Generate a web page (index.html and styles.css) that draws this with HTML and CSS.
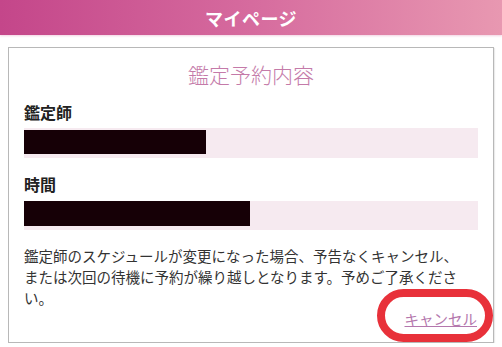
FILE: index.html
```html
<!DOCTYPE html>
<html lang="ja">
<head>
    <meta charset="UTF-8">
    <meta name="viewport" content="width=device-width, initial-scale=1.0">
    <title>マイページ</title>
    <link rel="stylesheet" href="styles.css">
</head>
<body>
    <header class="page-header">
        <h1>マイページ</h1>
    </header>

    <main>
        <section class="card">
            <h2 class="card-title">鑑定予約内容</h2>

            <div class="field field-first">
                <h3>鑑定師</h3>
                <div class="value"><span class="masked" style="width: 182px;"></span></div>
            </div>

            <div class="field">
                <h3>時間</h3>
                <div class="value value-short"><span class="masked" style="width: 226px;"></span></div>
            </div>

            <p class="notice">鑑定師のスケジュールが変更になった場合、予告なくキャンセル、または次回の待機に予約が繰り越しとなります。予めご了承ください。</p>

            <div class="actions">
                <a href="#" class="cancel-link">キャンセル</a>
            </div>

            <!-- red marker drawn over the screenshot -->
            <div class="marker"></div>
        </section>
    </main>
</body>
</html>
```

FILE: styles.css
```css
* {
    margin: 0;
    padding: 0;
    box-sizing: border-box;
}

body {
    font-family: "Noto Sans CJK JP", "Noto Sans", sans-serif;
    color: #333;
    background: #fff;
}

.page-header {
    height: 35px;
    display: flex;
    align-items: center;
    justify-content: center;
    background: linear-gradient(90deg, #c4468a 0%, #d66b9e 50%, #e898b1 100%);
    box-shadow: 0 1px 2px rgba(200, 80, 140, 0.25);
}

.page-header h1 {
    color: #fff;
    font-size: 18px;
    font-weight: bold;
    letter-spacing: 0.5px;
    line-height: 1;
}

main {
    padding: 12px 8px 0;
}

.card {
    position: relative;
    height: 296px;
    border: 1px solid #b8b8b8;
    box-shadow: 1px 1px 1px rgba(0, 0, 0, 0.08);
    padding: 11px 15px 0;
}

.card-title {
    text-align: center;
    font-size: 21px;
    font-weight: 300;
    line-height: 30px;
    color: #c47aa9;
}

.field h3 {
    font-size: 16px;
    font-weight: bold;
    line-height: 22px;
    color: #222;
}

.field-first {
    margin-top: 12px;
}

.field + .field {
    margin-top: 15px;
}

.value {
    margin-top: 5px;
    height: 30px;
    background: #f6eaf0;
    padding-top: 2px;
}

.value-short {
    margin-top: 6px;
    height: 29px;
    padding-top: 0;
}

.masked {
    display: block;
    height: 24px;
    background: #160006;
}

.value-short .masked {
    height: 25px;
}

.notice {
    margin-top: 15px;
    margin-right: 12px;
    font-size: 14.5px;
    line-height: 21px;
    color: #333;
    text-spacing-trim: space-all;
}

.actions {
    text-align: right;
    line-height: 21px;
    padding-right: 1px;
}

.cancel-link {
    font-size: 14.5px;
    color: #b477ad;
    text-decoration: underline;
}

.marker {
    position: absolute;
    left: 368px;
    top: 241px;
    width: 116px;
    height: 53px;
    border: 8px solid #e8313a;
    border-radius: 28px;
    pointer-events: none;
}
```
